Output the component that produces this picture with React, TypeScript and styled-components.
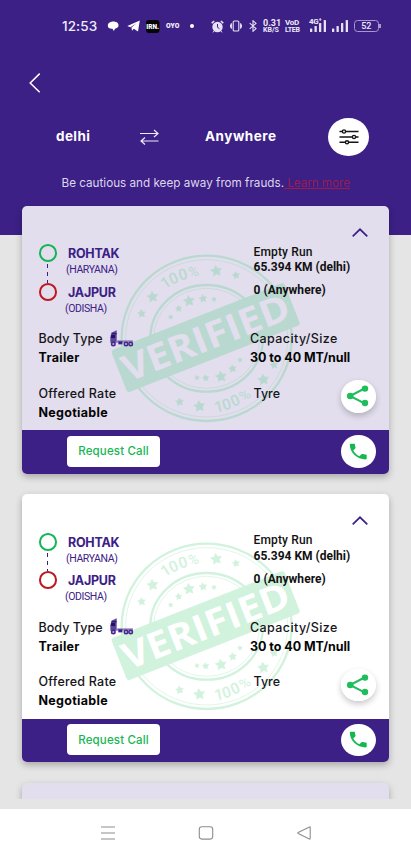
import React from "react";
import styled, { createGlobalStyle } from "styled-components";

const purple = "#3c2086";
const lilac = "#e2deed";

const GlobalStyle = createGlobalStyle`
  * { box-sizing: border-box; }
  body { margin: 0; background: #fff; font-family: Inter, "Open Sans", sans-serif; }
  button { border: 0; padding: 0; font-family: inherit; }
`;

const Screen = styled.div`
  width: 411px;
  height: 856px;
  display: flex;
  flex-direction: column;
  overflow: hidden;
  background: #e5e5e5;
`;

const Header = styled.header`
  flex: none;
  height: 235px;
  background: ${purple};
  color: #fff;
  display: flex;
  flex-direction: column;
`;

const StatusBar = styled.div`
  height: 52px;
  padding-left: 62px;
  display: flex;
  align-items: center;
  color: #eeeaf8;
`;

const Clock = styled.span`
  width: 45px;
  font: 500 13.5px/20px Inter, sans-serif;
  letter-spacing: 0.1px;
  white-space: nowrap;
`;

const StatusCell = styled.span<{ $w: number }>`
  flex: none;
  width: ${(p) => p.$w}px;
  height: 20px;
  display: flex;
  align-items: center;
  svg { flex: none; display: block; }
`;

const TinyStack = styled.span<{ $top: number; $bottom: number; $ls?: number }>`
  display: flex;
  flex-direction: column;
  font-family: Roboto, sans-serif;
  font-weight: 700;
  letter-spacing: ${(p) => p.$ls || 0}px;
  white-space: nowrap;
  span:first-child { font-size: ${(p) => p.$top}px; line-height: 8px; }
  span:last-child { font-size: ${(p) => p.$bottom}px; line-height: 7px; }
`;

const Oyo = styled.span`
  font: 900 6px/8px Inter, sans-serif;
`;

const BackRow = styled.div`
  height: 62px;
  padding: 20px 0 0 28px;
`;

const BackButton = styled.button`
  display: block;
  background: none;
  width: 14px;
  height: 22px;
`;

const RouteBar = styled.div`
  height: 46px;
  display: flex;
  align-items: center;
  padding-left: 56px;
`;

const Place = styled.span<{ $w: number; $ls: number }>`
  width: ${(p) => p.$w}px;
  padding-bottom: 3px;
  font-size: 13.5px;
  font-weight: 700;
  line-height: 20px;
  letter-spacing: ${(p) => p.$ls}px;
  white-space: nowrap;
`;

const SwapBox = styled.span`
  width: 65px;
  height: 18px;
  svg { display: block; }
`;

const RoundButton = styled.button<{ $w: number; $h: number }>`
  width: ${(p) => p.$w}px;
  height: ${(p) => p.$h}px;
  border-radius: 50%;
  background: #fff;
  display: flex;
  align-items: center;
  justify-content: center;
`;

const Notice = styled.p`
  margin: 13px 0 0 61.5px;
  font-size: 11.7px;
  line-height: 20px;
  color: #dcd6ee;
  white-space: nowrap;
`;

const LearnMore = styled.a`
  color: #9a1b50;
  text-decoration: underline;
  letter-spacing: -0.05px;
`;

const List = styled.main`
  position: relative;
  flex: none;
  height: 594px;
  margin-top: -30px;
  padding: 0.5px 22px 0;
  display: flex;
  flex-direction: column;
  gap: 20.5px;
  overflow: hidden;
`;

const CardBox = styled.article<{ $bg: string }>`
  position: relative;
  flex: none;
  height: 268px;
  border-radius: 5px;
  background: ${(p) => p.$bg};
  box-shadow: 0 3px 7px rgba(0, 0, 0, 0.27);
`;

const CardBody = styled.div`
  position: relative;
  height: 224.5px;
  display: grid;
  grid-template-columns: 212px 1fr;
`;

const StampLayer = styled.div`
  position: absolute;
  left: 78px;
  top: 36px;
  width: 210px;
  height: 190px;
`;

const LeftColumn = styled.div`
  padding: 38.5px 0 0 16.5px;
`;

const RightColumn = styled.div`
  position: relative;
  padding: 20px 0 0 16px;
`;

const Route = styled.div`
  display: flex;
  height: 85px;
`;

const Markers = styled.div`
  width: 29.5px;
  padding-top: 0.4px;
  display: flex;
  flex-direction: column;
`;

const Dot = styled.span<{ $c: string }>`
  width: 18.5px;
  height: 18px;
  border-radius: 50%;
  border: 2px solid ${(p) => p.$c};
`;

const Dashes = styled.span`
  height: 20.5px;
  width: 1.3px;
  margin-left: 8px;
  background: repeating-linear-gradient(transparent 0 2px, ${purple} 2px 6px, transparent 6px 8px);
`;

const City = styled.div`
  font-size: 12.5px;
  font-weight: 700;
  line-height: 19px;
  height: 18px;
  letter-spacing: -0.25px;
  color: ${purple};
`;

const State = styled.div<{ $shift: number }>`
  margin-left: ${(p) => p.$shift}px;
  height: 20.5px;
  font: 400 10.5px/16.5px Roboto, sans-serif;
  color: ${purple};
  letter-spacing: -0.4px;
`;

const Field = styled.div<{ $shift?: number }>`
  height: 54.5px;
  margin-left: ${(p) => p.$shift || 0}px;
`;

const Label = styled.div<{ $ls: number }>`
  display: flex;
  align-items: center;
  height: 19px;
  font-size: 12.5px;
  font-weight: 450;
  letter-spacing: ${(p) => p.$ls}px;
  color: #161419;
  white-space: nowrap;
  svg { margin-left: 7px; flex: none; }
`;

const Value = styled.div<{ $ls: number }>`
  height: 19px;
  font-size: 12.5px;
  font-weight: 700;
  line-height: 20px;
  letter-spacing: ${(p) => p.$ls}px;
  color: #050505;
  white-space: nowrap;
`;

const CaretRow = styled.div`
  height: 18px;
  padding: 2px 0 0 102px;
  svg { display: block; }
`;

const RunInfo = styled.div`
  height: 85.5px;
  padding: 1px 0 0 3.5px;
  font-family: Roboto, sans-serif;
  color: #111;
  white-space: nowrap;
`;

const RunLine = styled.div<{ $bold?: boolean; $gap?: number; $ls: number }>`
  margin-top: ${(p) => p.$gap || 0}px;
  font-size: 12px;
  font-weight: ${(p) => (p.$bold ? 700 : 500)};
  line-height: 15.5px;
  letter-spacing: ${(p) => p.$ls}px;
`;

const ShareSpot = styled.div`
  position: absolute;
  left: 107px;
  top: 174.5px;
  border-radius: 50%;
  box-shadow: 0 3px 6px rgba(0, 0, 0, 0.22);
`;

const CardFooter = styled.footer`
  position: relative;
  height: 43.5px;
  border-radius: 0 0 5px 5px;
  background: ${purple};
  display: flex;
  align-items: center;
  justify-content: space-between;
  padding: 0 13.5px 1px 45px;
`;

const RequestButton = styled.button`
  width: 93px;
  height: 31px;
  border-radius: 4px;
  background: #fff;
  color: #16b653;
  font-size: 11.5px;
  font-weight: 500;
  letter-spacing: 0.15px;
`;

const NavBar = styled.nav`
  flex: none;
  margin-top: 10px;
  height: 47px;
  background: #fff;
  display: flex;
  justify-content: center;
  align-items: center;
  gap: 82px;
`;

function star(cx: number, cy: number, r: number, turn = -8) {
  const pts: string[] = [];
  for (let i = 0; i < 10; i++) {
    const a = ((i * 36 - 90 + turn) * Math.PI) / 180;
    const q = i % 2 ? r * 0.5 : r;
    pts.push(`${(cx + q * Math.cos(a)).toFixed(1)},${(cy + q * Math.sin(a)).toFixed(1)}`);
  }
  return pts.join(" ");
}

const stars = [
  [349, 87, 17], [408, 100, 11], [158, 165, 17], [125, 215, 12],
  [239, 480, 12], [298, 493, 17], [490, 413, 17], [522, 369, 12],
  [212, 225, 7], [236, 200, 10], [267, 177, 17], [309, 170, 12], [342, 172, 7],
  [291, 407, 7], [317, 408, 10], [363, 404, 17], [398, 380, 12], [420, 354, 7],
];

function Stamp({ ink, paper }: { ink: string; paper: string }) {
  return (
    <svg width="210" height="190" viewBox="0 0 630 570">
      <g fill="none" stroke={ink}>
        <ellipse cx="320" cy="289" rx="255" ry="248" strokeWidth="7" />
        <ellipse cx="320" cy="289" rx="243" ry="236" strokeWidth="2" />
        <ellipse cx="320" cy="289" rx="169" ry="160" strokeWidth="7" />
        <ellipse cx="320" cy="289" rx="159" ry="150" strokeWidth="2" />
      </g>
      {stars.map(([x, y, r], i) => (
        <polygon key={i} points={star(x, y, r)} fill={ink} strokeLinejoin="round" stroke={ink} strokeWidth="2" />
      ))}
      <g fill={ink} fontFamily="Roboto, sans-serif" fontSize="46" fontWeight="500">
        <text transform="translate(194 142) rotate(-33)">1</text>
        <text transform="translate(215 129) rotate(-25)">0</text>
        <text transform="translate(241 116) rotate(-17)">0</text>
        <text transform="translate(268 106) rotate(-10)" fontSize="42" fontWeight="400">%</text>
        <text transform="translate(347 512) rotate(-13)">1</text>
        <text transform="translate(372 506) rotate(-18)">0</text>
        <text transform="translate(400 495) rotate(-24)">0</text>
        <text transform="translate(429 480) rotate(-32)" fontSize="42" fontWeight="400">%</text>
      </g>
      <g transform="translate(317 287) rotate(-21.5)">
        <rect x="-279" y="-68" width="558" height="136" rx="9" fill={ink} />
        <text
          x="0" y="39" textAnchor="middle" fontFamily="'Open Sans', sans-serif" fontSize="110"
          fontWeight="700" fill={paper} textLength="532" lengthAdjust="spacingAndGlyphs"
        >VERIFIED</text>
      </g>
    </svg>
  );
}

const Truck = () => (
  <svg width="24" height="18" viewBox="0 0 72 54">
    <path d="M4 8 20 1v37H1V22z" fill="#5d43a0" />
    <path d="M6 10h14v3H6zM4 15h11v9H3z" fill="#21105a" />
    <path d="M20 31h49v7H20z" fill="#8f7fbd" />
    <path d="M25 34h12v9H25z" fill={purple} />
    {[10, 48, 62].map((x) => (
      <g key={x}>
        <circle cx={x} cy="42" r="7.5" fill="#432a88" />
        <circle cx={x} cy="42" r="3.2" fill="#b7aad6" />
      </g>
    ))}
  </svg>
);

const Share = () => (
  <svg width="24" height="22" viewBox="0 0 24 22" fill="#20bd5c">
    <path d="M18.5 3.5 4 11l14.5 7.3" fill="none" stroke="#20bd5c" strokeWidth="2" />
    <circle cx="4.2" cy="11" r="3.3" />
    <circle cx="19" cy="3.6" r="3.2" />
    <circle cx="19" cy="18" r="3.2" />
  </svg>
);

const Phone = () => (
  <svg width="22.5" height="21" viewBox="0 0 24 24" preserveAspectRatio="none">
    <path
      fill="#12b950"
      d="M6.62 10.79c1.44 2.83 3.76 5.14 6.59 6.59l2.2-2.2c.27-.27.67-.36 1.02-.24 1.12.37 2.33.57 3.57.57.55 0 1 .45 1 1V20c0 .55-.45 1-1 1C10.61 21 3 13.39 3 4c0-.55.45-1 1-1h3.5c.55 0 1 .45 1 1 0 1.25.2 2.45.57 3.57.11.35.03.74-.25 1.02z"
    />
  </svg>
);

function LoadCard({ bg, ink }: { bg: string; ink: string }) {
  return (
    <CardBox $bg={bg}>
      <StampLayer><Stamp ink={ink} paper={bg} /></StampLayer>
      <CardBody>
        <LeftColumn>
          <Route>
            <Markers>
              <Dot $c="#16b457" />
              <Dashes />
              <Dot $c="#bd1720" />
            </Markers>
            <div>
              <City>ROHTAK</City>
              <State $shift={-2}>(HARYANA)</State>
              <City>JAJPUR</City>
              <State $shift={-3}>(ODISHA)</State>
            </div>
          </Route>
          <Field>
            <Label $ls={0.05}>Body Type<Truck /></Label>
            <Value $ls={0.3}>Trailer</Value>
          </Field>
          <Field>
            <Label $ls={0.22}>Offered Rate</Label>
            <Value $ls={0.3}>Negotiable</Value>
          </Field>
        </LeftColumn>
        <RightColumn>
          <CaretRow>
            <svg width="16" height="9" viewBox="0 0 16 9">
              <path d="M.7 8.3 8 1.3l7.3 7" fill="none" stroke={purple} strokeWidth="1.7" />
            </svg>
          </CaretRow>
          <RunInfo>
            <RunLine $ls={0.15}>Empty Run</RunLine>
            <RunLine $ls={0} $bold>65.394 KM (delhi)</RunLine>
            <RunLine $ls={0.05} $bold $gap={7.5}>0 (Anywhere)</RunLine>
          </RunInfo>
          <Field>
            <Label $ls={0.4}>Capacity/Size</Label>
            <Value $ls={-0.05}>30 to 40 MT/null</Value>
          </Field>
          <Field $shift={3.5}>
            <Label $ls={0}>Tyre</Label>
          </Field>
          <ShareSpot>
            <RoundButton $w={34.5} $h={32.5} aria-label="Share"><Share /></RoundButton>
          </ShareSpot>
        </RightColumn>
      </CardBody>
      <CardFooter>
        <RequestButton>Request Call</RequestButton>
        <RoundButton $w={34.5} $h={32.5} aria-label="Call"><Phone /></RoundButton>
      </CardFooter>
    </CardBox>
  );
}

const Bars = () => (
  <svg width="18" height="12" viewBox="0 0 18 12" fill="#e6e1f4">
    <rect x="0" y="8.5" width="2.3" height="3.5" rx=".6" />
    <rect x="4.5" y="6" width="2.3" height="6" rx=".6" />
    <rect x="9" y="3" width="2.3" height="9" rx=".6" />
    <rect x="13.7" y="0" width="2.3" height="12" rx=".6" />
  </svg>
);

const SignalLabel = styled.span`
  position: absolute;
  margin: -8px 0 0 -1px;
  font: 700 8px/8px Roboto, sans-serif;
  letter-spacing: -0.3px;
`;

const Battery = styled.span`
  position: relative;
  width: 24.5px;
  height: 12px;
  border: 1.3px solid #a79acb;
  border-radius: 3.5px;
  font: 500 9px/10px Roboto, sans-serif;
  text-align: center;
  &::after {
    content: "";
    position: absolute;
    right: -3px;
    top: 2.7px;
    width: 1.2px;
    height: 4px;
    background: #a79acb;
  }
`;

export default function App() {
  return (
    <Screen>
      <GlobalStyle />
      <Header>
        <StatusBar>
          <Clock>12:53</Clock>
          <StatusCell $w={19.5}>
            <svg width="12" height="11" viewBox="0 0 12 11"><path d="M4.5.8C7 .2 11.5 1 11.5 4.2c0 2.6-2.2 3-3.3 3.4L6.8 10 5.5 7.8C2.5 8 .8 6.8.8 4.5.8 2.5 2.5 1 4.5.8Z" fill="#fff" /></svg>
          </StatusCell>
          <StatusCell $w={19.5}>
            <svg width="13" height="12" viewBox="0 0 13 12"><path d="M.3 6 12.8.4 11 11.6 6.8 8.7 5 10.7 4.5 7.6 9.6 3.2 3.5 7.2Z" fill="#fff" /></svg>
          </StatusCell>
          <StatusCell $w={20}>
            <svg width="14" height="13" viewBox="0 0 14 13"><rect width="13.5" height="13" rx="3" fill="#050508" /><text x="6.7" y="8.8" fontFamily="Roboto, sans-serif" fontWeight="900" fontSize="6.5" textAnchor="middle" fill="#fff">IRN.</text></svg>
          </StatusCell>
          <StatusCell $w={24}><Oyo>OYO</Oyo></StatusCell>
          <StatusCell $w={21}>
            <svg width="4" height="4"><circle cx="2" cy="2" r="2" fill="#fff" /></svg>
          </StatusCell>
          <StatusCell $w={18.5}>
            <svg width="13" height="13" viewBox="0 0 13 13"><circle cx="6.5" cy="7" r="5.2" fill="#e6e1f4" /><path d="M.7 3.2 3.2 1M12.3 3.2 9.8 1" stroke="#e6e1f4" strokeWidth="1.6" /><path d="M6.5 4v3.3l2 1.4" fill="none" stroke={purple} strokeWidth="1" /><path d="m3 11-1 1.4M10 11l1 1.4" stroke="#e6e1f4" /></svg>
          </StatusCell>
          <StatusCell $w={19.5}>
            <svg width="12" height="12" viewBox="0 0 12 12" fill="none" stroke="#e6e1f4" strokeWidth="1.1"><rect x="3.2" y="1" width="5.6" height="10" rx="1" /><path d="M1.4 3.2v5.6M10.6 3.2v5.6M.3 4.6v2.8M11.7 4.6v2.8" /></svg>
          </StatusCell>
          <StatusCell $w={14}>
            <svg width="8" height="12" viewBox="0 0 8 12"><path d="m.7 3.2 6.3 5.4L4 11.3V.7L7 3.4.7 8.8" fill="none" stroke="#e6e1f4" strokeWidth="1.1" /></svg>
          </StatusCell>
          <StatusCell $w={22}>
            <TinyStack $top={9} $bottom={7}><span>0.31</span><span>KB/S</span></TinyStack>
          </StatusCell>
          <StatusCell $w={25}>
            <TinyStack $top={8} $bottom={7} $ls={-0.3}><span>VoD</span><span>LTEB</span></TinyStack>
          </StatusCell>
          <StatusCell $w={22}><SignalLabel>4G⁺</SignalLabel><Bars /></StatusCell>
          <StatusCell $w={22}><Bars /></StatusCell>
          <Battery>52</Battery>
        </StatusBar>
        <BackRow>
          <BackButton aria-label="Back">
            <svg width="14" height="22" viewBox="0 0 14 22"><path d="M11.7 1.6 2.2 11l9.5 9.2" fill="none" stroke="#fff" strokeWidth="1.5" /></svg>
          </BackButton>
        </BackRow>
        <RouteBar>
          <Place $w={84} $ls={0.4}>delhi</Place>
          <SwapBox>
            <svg width="19" height="18" viewBox="0 0 19 18" fill="none" stroke="#eeeaf7" strokeWidth="1.2"><path d="M0 5.5h18M14 2l4 3.5L14 9M18.5 13H1M5 9.5 1 13l4 3.5" /></svg>
          </SwapBox>
          <Place $w={123} $ls={0.5}>Anywhere</Place>
          <RoundButton $w={41} $h={38.5} aria-label="Filters">
            <svg width="20" height="16" viewBox="0 0 20 16" fill="#fff" stroke="#151515" strokeWidth="1.4"><path d="M.5 2.5h19M.5 8h19M.5 13.3h19" /><circle cx="5" cy="2.5" r="1.6" /><circle cx="15" cy="8" r="1.6" /><circle cx="8" cy="13.3" r="1.6" /></svg>
          </RoundButton>
        </RouteBar>
        <Notice>Be cautious and keep away from frauds.<LearnMore> Learn more</LearnMore></Notice>
      </Header>
      <List>
        <LoadCard bg={lilac} ink="#b9d9d0" />
        <LoadCard bg="#ffffff" ink="#d1f2dd" />
        <CardBox $bg={lilac} />
      </List>
      <NavBar>
        <svg width="16" height="16" viewBox="0 0 16 16"><path d="M1 2h14M1 8h14M1 14h14" stroke="#8e8e8e" strokeWidth="1.1" /></svg>
        <svg width="16" height="16" viewBox="0 0 16 16"><rect x="1.3" y="1.7" width="13.4" height="12.4" rx="2.5" fill="none" stroke="#8e8e8e" strokeWidth="1.1" /></svg>
        <svg width="16" height="16" viewBox="0 0 16 16"><path d="M14.2 2.3v11.2q0 .8-.8.5L2.2 8.5q-.8-.5 0-1L13.4 1.9q.8-.3.8.4Z" fill="none" stroke="#8e8e8e" strokeWidth="1.1" /></svg>
      </NavBar>
    </Screen>
  );
}
